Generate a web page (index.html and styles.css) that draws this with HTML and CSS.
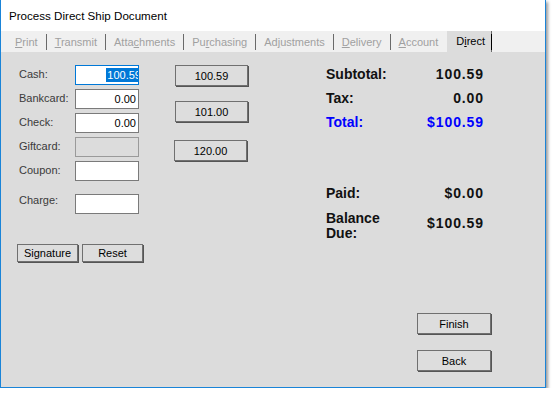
FILE: index.html
```html
<!DOCTYPE html>
<html>
<head>
<meta charset="utf-8">
<link rel="stylesheet" href="styles.css">
</head>
<body>
<div class="window">
  <div class="titlebar">Process Direct Ship Document</div>
  <div class="tabs">
    <span class="tab"><u>P</u>rint</span>
    <span class="tab"><u>T</u>ransmit</span>
    <span class="tab">Atta<u>c</u>hments</span>
    <span class="tab">Pu<u>r</u>chasing</span>
    <span class="tab">Ad<u>j</u>ustments</span>
    <span class="tab"><u>D</u>elivery</span>
    <span class="tab last"><u>A</u>ccount</span>
    <span class="tab active">D<u>i</u>rect</span>
  </div>
  <div class="content">
    <div class="col-left">
      <div class="form">
        <label class="lbl">Cash:</label>
        <div class="field focus"><span class="sel">100.59</span></div>
        <label class="lbl">Bankcard:</label>
        <div class="field">0.00</div>
        <label class="lbl">Check:</label>
        <div class="field">0.00</div>
        <label class="lbl">Giftcard:</label>
        <div class="field disabled"></div>
        <label class="lbl">Coupon:</label>
        <div class="field"></div>
        <label class="lbl charge">Charge:</label>
        <div class="field charge-field"></div>
      </div>
      <div class="actions">
        <button class="btn small">Signature</button>
        <button class="btn small">Reset</button>
      </div>
    </div>
    <div class="col-mid">
      <button class="btn amt">100.59</button>
      <button class="btn amt second">101.00</button>
      <button class="btn amt third">120.00</button>
    </div>
    <div class="col-right">
      <div class="totals">
        <span class="tl">Subtotal:</span><span class="tv">100.59</span>
        <span class="tl">Tax:</span><span class="tv">0.00</span>
        <span class="tl blue">Total:</span><span class="tv blue">$100.59</span>
      </div>
      <div class="totals paid">
        <span class="tl">Paid:</span><span class="tv">$0.00</span>
        <span class="tl two">Balance<br>Due:</span><span class="tv">$100.59</span>
      </div>
      <div class="nav">
        <button class="btn big">Finish</button>
        <button class="btn big">Back</button>
      </div>
    </div>
  </div>
</div>
</body>
</html>
```

FILE: styles.css
```css
html, body {
  margin: 0;
  padding: 0;
  background: #ffffff;
}
body {
  font-family: "Liberation Sans", Arial, sans-serif;
}
.window {
  width: 546px;
  height: 388px;
  border: 1px solid #1a84d8;
  border-top: none;
  box-sizing: border-box;
  background: #dcdcdc;
  box-shadow: 2px 2px 3px rgba(0, 0, 0, 0.4);
  display: flex;
  flex-direction: column;
}
.titlebar {
  height: 31px;
  background: #ffffff;
  font-size: 11.6px;
  color: #000;
  padding-left: 8px;
  line-height: 31px;
}
.tabs {
  height: 21px;
  background: #f0f0f0;
  display: flex;
  align-items: center;
  padding-left: 6px;
  font-size: 11px;
  color: #a0a0a0;
}
.tab {
  height: 16px;
  line-height: 16px;
  padding: 0 8px 0 8px;
  border-right: 1px solid #6a6a6a;
}
.tab.last {
  border-right: none;
}
.tab.active {
  color: #000;
  background: #dcdcdc;
  height: 21px;
  line-height: 21px;
  margin-left: 1px;
  padding: 0 6px 0 9px;
  position: relative;
}
.tab.active::after {
  content: "";
  position: absolute;
  right: -1px;
  top: 3px;
  height: 16px;
  border-right: 1px solid #000;
}
.content {
  flex: 1;
  display: flex;
  padding: 13px 0 0 15px;
}
.col-left {
  width: 128px;
  display: flex;
  flex-direction: column;
}
.form {
  display: grid;
  grid-template-columns: 59px 64px;
  row-gap: 4px;
  align-items: center;
}
.lbl {
  font-size: 11px;
  color: #3a3a3a;
  padding-left: 3px;
  margin-top: -2px;
}
.field.charge-field {
  margin-top: 9px;
}
.lbl.charge {
  align-self: start;
  margin-top: 9px;
}
.field {
  height: 20px;
  box-sizing: border-box;
  border: 1px solid #7a7a7a;
  background: #fff;
  font-size: 11px;
  line-height: 18px;
  text-align: right;
  padding-right: 2px;
  color: #000;
  overflow: hidden;
  white-space: nowrap;
}
.field.focus {
  border-color: #0078d7;
  padding-right: 0;
}
.sel {
  background: #0078d7;
  color: #fff;
  display: inline-block;
  line-height: 14px;
  margin-right: -3px;
  padding-left: 1px;
}
.field.disabled {
  background: #dcdcdc;
  border-color: #9a9a9a;
}
.btn {
  font-family: "Liberation Sans", Arial, sans-serif;
  font-size: 11px;
  color: #000;
  background: #dddddd;
  border: 1px solid #707070;
  box-shadow: 1px 1px 0 #555;
  padding: 0;
  margin: 0;
  box-sizing: border-box;
}
.actions {
  display: flex;
  gap: 4px;
  margin-top: 30px;
  margin-left: 1px;
}
.btn.small {
  width: 61px;
  height: 18px;
}
.col-mid {
  margin-left: 31px;
  display: flex;
  flex-direction: column;
  align-items: flex-start;
}
.btn.amt {
  width: 73px;
  height: 21px;
}
.btn.second {
  margin-top: 15px;
}
.btn.third {
  margin-top: 18px;
  margin-left: -1px;
}
.col-right {
  margin-left: 78px;
  width: 165px;
  display: flex;
  flex-direction: column;
}
.totals {
  width: 157px;
  display: grid;
  grid-template-columns: 1fr auto;
  grid-auto-rows: 24px;
  align-items: center;
  font-size: 14px;
  font-weight: bold;
  color: #111;
  margin-top: -3px;
}
.tv {
  text-align: right;
  letter-spacing: 0.9px;
  margin-right: -1px;
}
.blue {
  color: #0000ff;
}
.totals.paid {
  margin-top: 47px;
  grid-template-rows: 24px 35px;
}
.tl.two {
  line-height: 15px;
  padding-top: 7px;
}
.tv.mid {
  padding-top: 2px;
}
.nav {
  display: flex;
  flex-direction: column;
  align-items: flex-end;
  gap: 16px;
  margin-top: 73px;
}
.btn.big {
  width: 74px;
  height: 21px;
}
```
